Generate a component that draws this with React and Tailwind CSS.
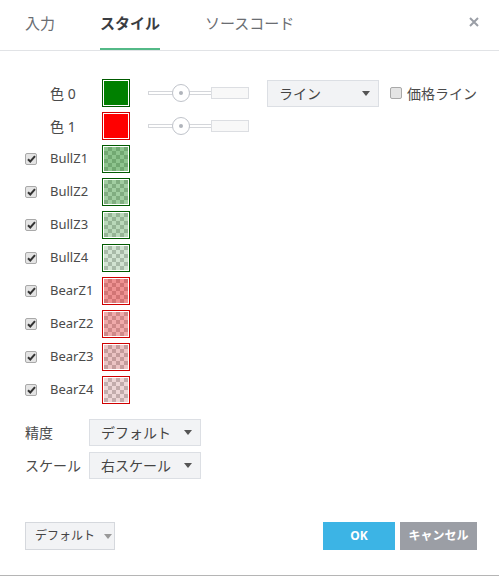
import React from "react";

const font = { fontFamily: '"Noto Sans", "Noto Sans CJK JP", sans-serif' };

const rows = [
  { label: "BullZ1", color: "rgba(0,128,0,0.42)", border: "border-[#005a00]" },
  { label: "BullZ2", color: "rgba(0,128,0,0.34)", border: "border-[#005a00]" },
  { label: "BullZ3", color: "rgba(0,128,0,0.24)", border: "border-[#005a00]" },
  { label: "BullZ4", color: "rgba(0,128,0,0.14)", border: "border-[#005a00]" },
  { label: "BearZ1", color: "rgba(230,0,0,0.4)", border: "border-[#d00000]" },
  { label: "BearZ2", color: "rgba(230,0,0,0.3)", border: "border-[#d00000]" },
  { label: "BearZ3", color: "rgba(200,0,0,0.2)", border: "border-[#d00000]" },
  { label: "BearZ4", color: "rgba(180,0,0,0.12)", border: "border-[#d00000]" },
];

const Caret = ({ className = "" }) => (
  <svg width="8" height="5" viewBox="0 0 8 5" className={className}>
    <path d="M0 0h8L4 5z" fill="currentColor" />
  </svg>
);

const Check = ({ checked }) => (
  <span className="flex h-[12px] w-[12px] items-center justify-center rounded-[2px] border border-[#a9a9a9] bg-[#e4e4e4]">
    {checked && (
      <svg width="9" height="8" viewBox="0 0 9 8">
        <path d="M1 4.2l2.3 2.3L8 1.2" stroke="#333" strokeWidth="2" fill="none" />
      </svg>
    )}
  </span>
);

const Swatch = ({ color, border, solid }) => (
  <span className={`flex h-[28px] w-[28px] border-[1.5px] ${border} bg-white p-[1px]`}>
    {solid ? (
      <span className="h-full w-full" style={{ background: color }} />
    ) : (
      <span className="relative h-full w-full bg-[repeating-conic-gradient(#c4c4c4_0_25%,#f4f4f4_0_50%)] bg-[length:8px_8px]">
        <span className="absolute inset-0" style={{ background: color }} />
      </span>
    )}
  </span>
);

const Slider = () => (
  <div className="relative ml-[18px] h-[18px] w-[101px]">
    <div className="absolute left-0 top-[7px] h-[4px] w-[64px] border border-[#d4d6da] bg-white" />
    <div className="absolute left-[63px] top-[3px] h-[12px] w-[38px] border border-[#dcdee2] bg-[#f8f8f8]" />
    <div className="absolute left-[24px] top-0 flex h-[18px] w-[18px] items-center justify-center rounded-full border border-[#bfc3ca] bg-white">
      <span className="h-[4px] w-[4px] rounded-full bg-[#b0b4bb]" />
    </div>
  </div>
);

const Select = ({ text, width }) => (
  <div className={`flex h-[27px] ${width} items-center justify-between border border-[#dcdfe4] bg-[#f2f3f5] pl-[11px] pr-[8px] text-[14px] text-[#444]`}>
    <span>{text}</span>
    <Caret className="text-[#555]" />
  </div>
);

export default function App() {
  return (
    <div style={font} className="relative h-[576px] w-[499px] border-b border-[#b5b5b5] bg-white text-[#4a4a4a]">
      {/* header */}
      <div className="flex h-[51px] items-stretch border-b border-[#e1e3e6]">
        <div className="ml-[25px] flex gap-[45px]">
          <div className="flex flex-col justify-end">
            <span className="pb-[14px] text-[15px] text-[#6a6d72]">入力</span>
            <span className="h-[2px]" />
          </div>
          <div className="flex flex-col justify-end">
            <span className="pb-[14px] text-[15px] font-bold text-[#3a3d42]">スタイル</span>
            <span className="h-[2px] bg-[#53b987]" />
          </div>
          <div className="flex flex-col justify-end">
            <span className="pb-[14px] text-[15px] text-[#6a6d72]">ソースコード</span>
            <span className="h-[2px]" />
          </div>
        </div>
        <svg width="10" height="10" viewBox="0 0 10 10" className="ml-auto mr-[20px] mt-[17px]">
          <path d="M1 1l8 8M9 1l-8 8" stroke="#9a9ea6" strokeWidth="2" />
        </svg>
      </div>

      {/* body */}
      <div className="flex flex-col gap-[5px] pl-[25px] pt-[28px]">
        <div className="flex h-[28px] items-center">
          <span className="ml-[25px] w-[52px] text-[14px]">色 0</span>
          <Swatch color="#008000" border="border-[#005a00]" solid />
          <Slider />
          <div className="ml-[18px]">
            <Select text="ライン" width="w-[112px]" />
          </div>
          <span className="ml-[11px]"><Check /></span>
          <span className="ml-[5px] text-[14px]">価格ライン</span>
        </div>
        <div className="flex h-[28px] items-center">
          <span className="ml-[25px] w-[52px] text-[14px]">色 1</span>
          <Swatch color="#ff0000" border="border-[#d00000]" solid />
          <Slider />
        </div>
        {rows.map((r) => (
          <div key={r.label} className="flex h-[28px] items-center">
            <Check checked />
            <span className="ml-[13px] w-[52px] text-[13px]">{r.label}</span>
            <Swatch color={r.color} border={r.border} />
          </div>
        ))}
        <div className="mt-[10px] flex flex-col gap-[6px]">
          <div className="flex items-center">
            <span className="w-[64px] text-[14px]">精度</span>
            <Select text="デフォルト" width="w-[112px]" />
          </div>
          <div className="flex items-center">
            <span className="w-[64px] text-[14px]">スケール</span>
            <Select text="右スケール" width="w-[112px]" />
          </div>
        </div>
      </div>

      {/* footer */}
      <div className="absolute bottom-[25px] left-[25px] right-[22px] flex items-center">
        <div className="flex h-[28px] w-[90px] shrink-0 items-center gap-[9px] whitespace-nowrap border border-[#d5d8dd] bg-[#f2f3f5] pl-[9px] text-[12px] text-[#444]">
          <span>デフォルト</span>
          <Caret className="shrink-0 text-[#999]" />
        </div>
        <div className="ml-auto flex h-[28px] w-[72px] items-center justify-center bg-[#3cb4e5] text-[12px] font-bold text-white">OK</div>
        <div className="ml-[5px] flex h-[28px] w-[77px] items-center justify-center bg-[#9b9ea5] text-[12px] font-bold text-white">キャンセル</div>
      </div>
    </div>
  );
}
